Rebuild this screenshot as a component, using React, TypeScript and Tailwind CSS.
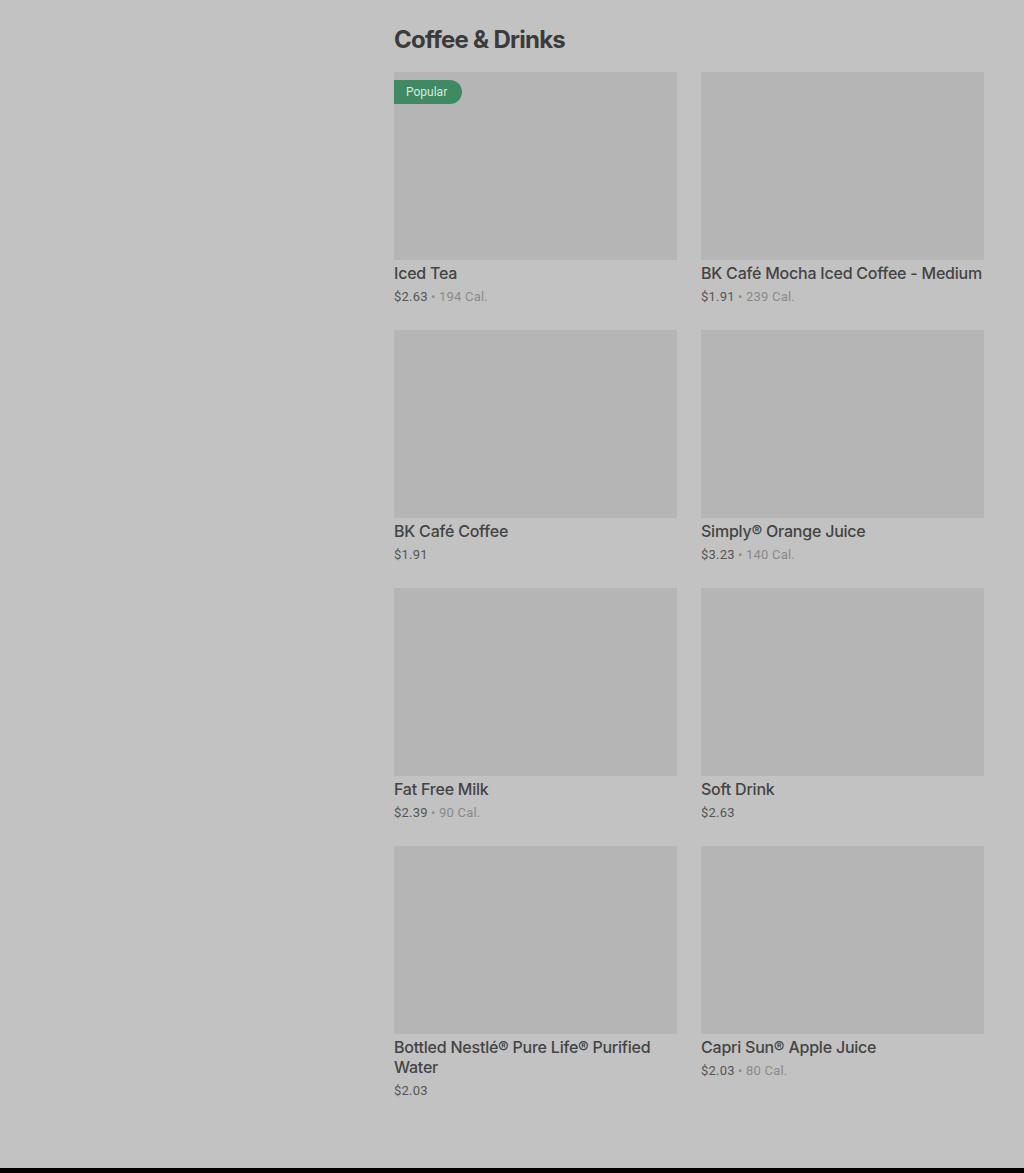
import React from "react";

type Item = { name: string; price: string; cal?: string; popular?: boolean };

const items: Item[] = [
  { name: "Iced Tea", price: "$2.63", cal: "194 Cal.", popular: true },
  { name: "BK Café Mocha Iced Coffee - Medium", price: "$1.91", cal: "239 Cal." },
  { name: "BK Café Coffee", price: "$1.91" },
  { name: "Simply® Orange Juice", price: "$3.23", cal: "140 Cal." },
  { name: "Fat Free Milk", price: "$2.39", cal: "90 Cal." },
  { name: "Soft Drink", price: "$2.63" },
  { name: "Bottled Nestlé® Pure Life® Purified Water", price: "$2.03" },
  { name: "Capri Sun® Apple Juice", price: "$2.03", cal: "80 Cal." },
];

function Card({ item }: { item: Item }) {
  return (
    <div className="flex flex-col">
      <div className="relative h-[188px] bg-[#b5b5b5]">
        {item.popular && (
          <div className="absolute left-0 top-[8px] h-[24px] pl-[12px] pr-[15px] flex items-center rounded-r-full bg-[#3f8a62] text-[#d8e8dd] text-[12px] leading-none font-['Roboto',sans-serif]">
            Popular
          </div>
        )}
      </div>
      <div className="mt-[3px] text-[16px] leading-[20px] font-medium tracking-[-0.22px] text-[#444444]">{item.name}</div>
      <div className="mt-[4px] text-[13px] leading-[20px] tracking-[0.2px] text-[#555555] font-['Roboto',sans-serif]">
        {item.price}
        {item.cal && (
          <span className="text-[#8a8a8a]">
            {" • "}
            {item.cal}
          </span>
        )}
      </div>
    </div>
  );
}

export default function App() {
  return (
    <div className="h-[1173px] flex flex-col font-['Inter',sans-serif]">
      <div className="flex-1 bg-[#c2c2c2] pl-[394px] pr-[40px] pt-[24px]">
        <h2 className="text-[24px] leading-[32px] font-bold tracking-[-0.75px] text-[#3b3b3b]">Coffee &amp; Drinks</h2>
        <div className="mt-[16px] grid grid-cols-2 gap-x-[24px] gap-y-[23px]">
          {items.map((it) => (
            <Card key={it.name} item={it} />
          ))}
        </div>
      </div>
      <div className="h-[5px] bg-black" />
    </div>
  );
}
